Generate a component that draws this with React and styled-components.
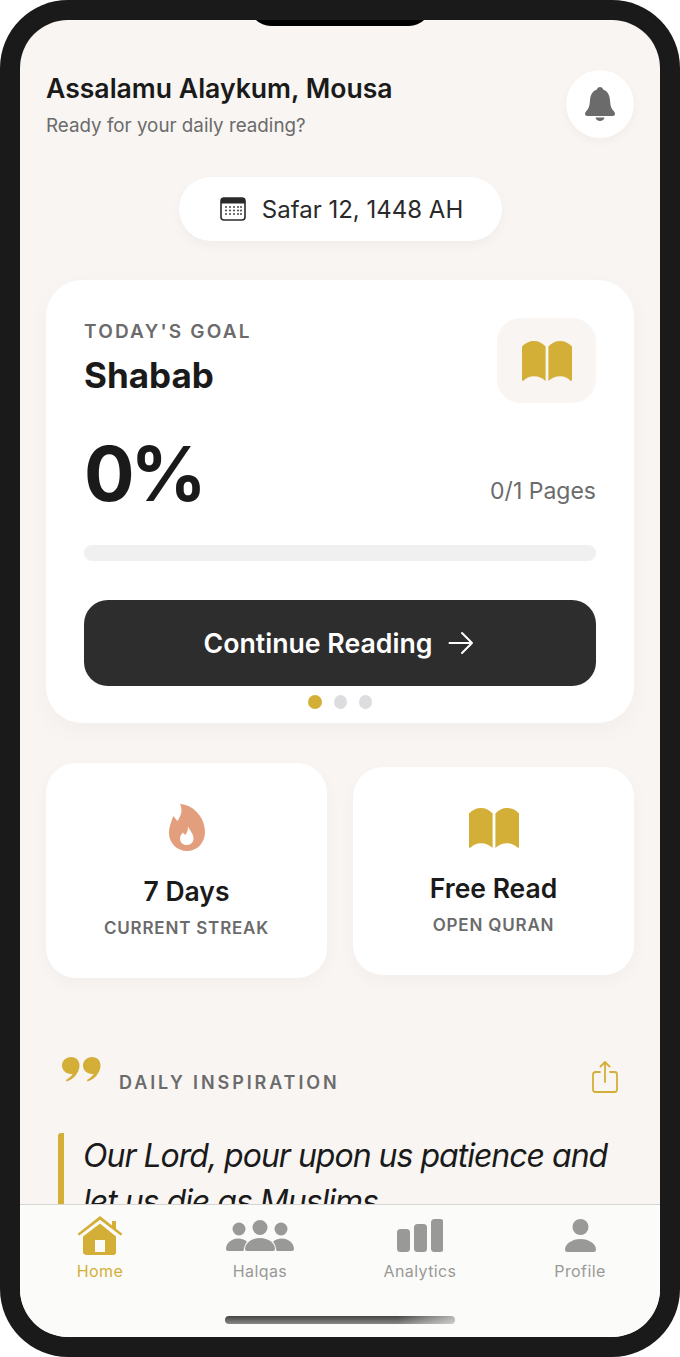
import React from "react";
import styled, { createGlobalStyle } from "styled-components";

const GOLD = "#d4af37";
const INK = "#1a1a1a";
const MUTED = "#6b6b6b";
const TAB_GREY = "#999997";

const GlobalStyle = createGlobalStyle`
  html, body {
    margin: 0;
    padding: 0;
    background: #fff;
  }
  body {
    font-family: "Inter", "Liberation Sans", sans-serif;
    -webkit-font-smoothing: antialiased;
  }
  * {
    box-sizing: border-box;
  }
`;

function BookIcon() {
  return (
    <svg width="50" height="40" viewBox="0 0 50 40" fill={GOLD}>
      <path d="M0 5.5C3 2 7.5 0 12 0C16.5 0 20.5 2 23.6 5.5V40C20.5 37 16.5 35.3 12 35.3C7.5 35.3 4 37 1.2 40C.4 40 0 39.4 0 38.6Z" />
      <path d="M50 5.5C47 2 42.5 0 38 0C33.5 0 29.5 2 26.4 5.5V40C29.5 37 33.5 35.3 38 35.3C42.5 35.3 46 37 48.8 40C49.6 40 50 39.4 50 38.6Z" />
    </svg>
  );
}

function BellIcon() {
  return (
    <svg width="30" height="34" viewBox="0 0 30 34" fill={MUTED}>
      <path d="M15 0C16.6 0 17.8 1.1 18.1 2.5C22.6 4 24.6 8 25 13C25.4 18 25.8 21 28.6 24C29.6 25.1 30 26 30 27C30 28.2 29 29 27.6 29H2.4C1 29 0 28.2 0 27C0 26 .4 25.1 1.4 24C4.2 21 4.6 18 5 13C5.4 8 7.4 4 11.9 2.5C12.2 1.1 13.4 0 15 0Z" />
      <path d="M10.5 30.5H19.5C19.2 32.5 17.3 34 15 34C12.7 34 10.8 32.5 10.5 30.5Z" />
    </svg>
  );
}

function CalendarIcon() {
  return (
    <svg width="26" height="24" viewBox="0 0 26 24">
      <rect x="1" y="1" width="24" height="22" rx="3" fill="#fff" stroke="#2a2a2a" strokeWidth="1.6" />
      <path d="M1 4a3 3 0 0 1 3-3h18a3 3 0 0 1 3 3v2.5H1Z" fill="#2a2a2a" />
      <g fill="#2a2a2a">
        {[10, 13.5, 17].map((y) =>
          [6, 10, 14, 18, 21].map((x) => (
            <rect key={`${x}-${y}`} x={x - 0.8} y={y - 0.8} width="1.6" height="1.6" />
          ))
        )}
      </g>
    </svg>
  );
}

function ArrowIcon() {
  return (
    <svg width="26" height="24" viewBox="0 0 26 24" fill="none" stroke="#fff" strokeWidth="2" strokeLinecap="round" strokeLinejoin="round">
      <path d="M1.5 12H24M14 2L24 12L14 22" />
    </svg>
  );
}

function FlameIcon() {
  return (
    <svg width="36" height="47" viewBox="0 0 36 47">
      <path
        fill="#e39f7d"
        d="M11 0C23 .5 36 12 36 28C36 39 28 47 18 47C8 47 0 39 0 29C0 22 3 17 4 12C6 13.5 7 15.5 8.5 17C12 12 14 6 11 0Z"
      />
      <path
        fill="#fff"
        d="M19 22C20 26 24.5 29 24.5 34.5C24.5 38.5 21.5 41 17.5 41C14 41 11 38.5 11 34.5C11 32 12.5 30 14 28.5C14.8 30 15.5 30.5 16.3 30.8C18.3 28.5 19.3 25 19 22Z"
      />
    </svg>
  );
}

function QuoteIcon() {
  return (
    <svg width="39" height="25" viewBox="0 0 39 25" fill={GOLD}>
      <path d="M9 0C14.5 0 17.5 4 17.5 8.5C17.5 15.5 11.5 22.5 4.5 24.5L4 23C7 21 9.5 19 10.8 16.7C10.2 16.9 9.6 17 9 17C4 17 0 13.3 0 8.5C0 3.8 4 0 9 0Z" />
      <path d="M30 0C35.5 0 38.5 4 38.5 8.5C38.5 15.5 32.5 22.5 25.5 24.5L25 23C28 21 30.5 19 31.8 16.7C31.2 16.9 30.6 17 30 17C25 17 21 13.3 21 8.5C21 3.8 25 0 30 0Z" />
    </svg>
  );
}

function ShareIcon() {
  return (
    <svg width="26" height="32" viewBox="0 0 26 32" fill="none" stroke={GOLD} strokeWidth="1.8" strokeLinecap="round" strokeLinejoin="round">
      <path d="M8 11H3.5C2 11 1 12 1 13.5V28.5C1 30 2 31 3.5 31H22.5C24 31 25 30 25 28.5V13.5C25 12 24 11 22.5 11H18" />
      <path d="M13 21V1.5M8.5 5.5L13 1L17.5 5.5" />
    </svg>
  );
}

function HomeIcon({ color }) {
  return (
    <svg width="44" height="39" viewBox="0 0 44 39" fill={color}>
      <path fillRule="evenodd" d="M22 7.5L38 20.5V36.5C38 38 37 39 35.5 39H8.5C7 39 5 38 5 36.5V20.5ZM17 24V36H27V24Z" />
      <path d="M22 0L34 9.5V5H38V12.7L43.4 17C44.2 17.7 44.2 18.4 43.8 18.9C43.3 19.5 42.6 19.5 42 19L22 3.8L2 19C1.4 19.5 .7 19.5 .2 18.9C-.2 18.4 -.2 17.7 .6 17Z" />
    </svg>
  );
}

function GroupIcon({ color }) {
  return (
    <svg width="68" height="31" viewBox="0 0 68 31" fill={color}>
      <circle cx="13" cy="9" r="6.5" />
      <circle cx="34" cy="7.5" r="7.5" />
      <circle cx="55" cy="9" r="6.5" />
      <path d="M2 31C.8 31 0 30.2 0 29C0 23 6 18.5 12 18.5C15.5 18.5 18.5 19.5 21 21.5C19 24 18 27 17.5 31Z" />
      <path d="M21 31C19.8 31 19 30.2 19 29C19 23 25.5 18 34 18C42.5 18 49 23 49 29C49 30.2 48.2 31 47 31Z" />
      <path d="M66 31C67.2 31 68 30.2 68 29C68 23 62 18.5 56 18.5C52.5 18.5 49.5 19.5 47 21.5C49 24 50 27 50.5 31Z" />
    </svg>
  );
}

function BarsIcon({ color }) {
  return (
    <svg width="46" height="33" viewBox="0 0 46 33" fill={color}>
      <rect x="0" y="10" width="13" height="23" rx="3.5" />
      <rect x="17" y="5" width="13" height="28" rx="3.5" />
      <rect x="34" y="0" width="12.5" height="33" rx="3.5" />
    </svg>
  );
}

function PersonIcon({ color }) {
  return (
    <svg width="31" height="33" viewBox="0 0 31 33" fill={color}>
      <circle cx="15.5" cy="8" r="8" />
      <path d="M2.5 33C1 33 0 32 0 30.7C0 25 7 20 15.5 20C24 20 31 25 31 30.7C31 32 30 33 28.5 33Z" />
    </svg>
  );
}

const TABS = [
  { label: "Home", Icon: HomeIcon, active: true },
  { label: "Halqas", Icon: GroupIcon },
  { label: "Analytics", Icon: BarsIcon },
  { label: "Profile", Icon: PersonIcon },
];

export default function App() {
  return (
    <>
      <GlobalStyle />
      <Frame>
        <Screen>
          <Notch />
          <Header>
            <div>
              <Title>Assalamu Alaykum, Mousa</Title>
              <Subtitle>Ready for your daily reading?</Subtitle>
            </div>
            <BellButton>
              <BellIcon />
            </BellButton>
          </Header>

          <DateRow>
            <DatePill>
              <CalendarIcon />
              Safar 12, 1448 AH
            </DatePill>
          </DateRow>

          <GoalCard>
            <GoalTop>
              <div>
                <GoalLabel>TODAY'S GOAL</GoalLabel>
                <GoalName>Shabab</GoalName>
              </div>
              <BookTile>
                <BookIcon />
              </BookTile>
            </GoalTop>
            <ProgressRow>
              <Percent>0%</Percent>
              <Pages>0/1 Pages</Pages>
            </ProgressRow>
            <Track />
            <ContinueButton>
              Continue Reading
              <ArrowIcon />
            </ContinueButton>
            <Dots>
              <Dot $active />
              <Dot />
              <Dot />
            </Dots>
          </GoalCard>

          <StatRow>
            <StatCard $height={215}>
              <FlameIcon />
              <StatValue>7 Days</StatValue>
              <StatLabel>CURRENT STREAK</StatLabel>
            </StatCard>
            <StatCard $height={208}>
              <BookIcon />
              <StatValue>Free Read</StatValue>
              <StatLabel>OPEN QURAN</StatLabel>
            </StatCard>
          </StatRow>

          <InspirationHead>
            <QuoteMark>
              <QuoteIcon />
            </QuoteMark>
            <InspirationLabel>DAILY INSPIRATION</InspirationLabel>
            <ShareIcon />
          </InspirationHead>
          <Verse>
            <VerseText>Our Lord, pour upon us patience and let us die as Muslims.</VerseText>
          </Verse>

          <TabBar>
            {TABS.map(({ label, Icon, active }) => (
              <Tab key={label} $active={active}>
                <TabIconBox>
                  <Icon color={active ? GOLD : TAB_GREY} />
                </TabIconBox>
                {label}
              </Tab>
            ))}
            <HomeIndicator />
          </TabBar>
        </Screen>
      </Frame>
    </>
  );
}

const Frame = styled.div`
  width: 680px;
  height: 1357px;
  padding: 20px;
  background: #1a1a1a;
  border-radius: 68px;
  overflow: hidden;
`;

const Screen = styled.div`
  position: relative;
  height: 1317px;
  padding: 50px 26px 0;
  background: #f8f5f2;
  border-radius: 48px;
  overflow: hidden;
`;

const Notch = styled.div`
  position: absolute;
  top: -20px;
  left: 229px;
  width: 182px;
  height: 26px;
  background: #000;
  border-radius: 0 0 22px 22px;
`;

const Header = styled.header`
  display: flex;
  justify-content: space-between;
  align-items: flex-start;
`;

const Title = styled.h1`
  margin: 0;
  padding-top: 2px;
  font-size: 26.6px;
  line-height: 32px;
  font-weight: 600;
  color: ${INK};
`;

const Subtitle = styled.p`
  margin: 10px 0 0;
  font-size: 18.8px;
  line-height: 24px;
  color: ${MUTED};
`;

const BellButton = styled.div`
  display: flex;
  justify-content: center;
  align-items: center;
  width: 68px;
  height: 68px;
  background: #fff;
  border-radius: 50%;
  box-shadow: 0 3px 10px rgba(0, 0, 0, 0.04);
`;

const DateRow = styled.div`
  display: flex;
  justify-content: center;
  margin-top: 39px;
  padding-left: 1px;
`;

const DatePill = styled.div`
  display: flex;
  align-items: center;
  gap: 16px;
  height: 64px;
  padding: 0 39px 0 41px;
  background: #fff;
  border-radius: 32px;
  font-size: 24px;
  color: #2a2a2a;
  box-shadow: 0 4px 12px rgba(0, 0, 0, 0.04);
`;

const GoalCard = styled.section`
  position: relative;
  margin-top: 39px;
  height: 443px;
  padding: 38px 38px 0;
  background: #fff;
  border-radius: 36px;
  box-shadow: 0 8px 24px rgba(0, 0, 0, 0.03);
`;

const GoalTop = styled.div`
  display: flex;
  justify-content: space-between;
  align-items: flex-start;
`;

const GoalLabel = styled.div`
  margin-top: 3px;
  font-size: 19px;
  line-height: 22px;
  font-weight: 600;
  letter-spacing: 2.2px;
  color: ${MUTED};
`;

const GoalName = styled.div`
  margin-top: 11px;
  font-size: 35px;
  line-height: 42px;
  font-weight: 700;
  color: ${INK};
`;

const BookTile = styled.div`
  display: flex;
  justify-content: center;
  align-items: center;
  width: 99px;
  height: 85px;
  background: #f8f5f2;
  border-radius: 24px;
`;

const ProgressRow = styled.div`
  display: flex;
  justify-content: space-between;
  align-items: flex-end;
  margin-top: 25px;
`;

const Percent = styled.div`
  font-size: 75px;
  line-height: 92px;
  font-weight: 700;
  letter-spacing: -4px;
  color: ${INK};
`;

const Pages = styled.div`
  padding-bottom: 15px;
  font-size: 23px;
  line-height: 28px;
  color: ${MUTED};
`;

const Track = styled.div`
  height: 16px;
  margin-top: 25px;
  background: #f0f0f0;
  border-radius: 8px;
`;

const ContinueButton = styled.div`
  display: flex;
  justify-content: center;
  align-items: center;
  gap: 16px;
  height: 86px;
  margin-top: 39px;
  padding-right: 2px;
  background: #2d2d2d;
  border-radius: 24px;
  font-size: 26.7px;
  font-weight: 600;
  color: #fff;
`;

const Dots = styled.div`
  display: flex;
  justify-content: center;
  gap: 12px;
  margin-top: 9px;
`;

const Dot = styled.span`
  width: ${(p) => (p.$active ? 14 : 13)}px;
  height: 14px;
  background: ${(p) => (p.$active ? GOLD : "#dddddf")};
  border-radius: 50%;
`;

const StatRow = styled.div`
  display: flex;
  align-items: center;
  gap: 26px;
  margin-top: 40px;
`;

const StatCard = styled.div`
  display: flex;
  flex: 1;
  flex-direction: column;
  align-items: center;
  height: ${(p) => p.$height}px;
  padding-top: 41px;
  background: #fff;
  border-radius: 30px;
  box-shadow: 0 6px 18px rgba(0, 0, 0, 0.03);
`;

const StatValue = styled.div`
  margin-top: 24px;
  font-size: 26.5px;
  line-height: 32px;
  font-weight: 600;
  color: ${INK};
`;

const StatLabel = styled.div`
  margin-top: 10px;
  font-size: 17px;
  line-height: 22px;
  font-weight: 600;
  letter-spacing: 0.8px;
  color: ${MUTED};
`;

const InspirationHead = styled.div`
  display: flex;
  align-items: flex-end;
  margin-top: 79px;
  padding: 0 16px;
`;

const QuoteMark = styled.div`
  display: flex;
  margin-right: 18px;
  padding-bottom: 11px;
`;

const InspirationLabel = styled.div`
  flex: 1;
  font-size: 18px;
  line-height: 22px;
  font-weight: 600;
  letter-spacing: 2.9px;
  color: ${MUTED};
  margin-bottom: -1px;
`;

const Verse = styled.blockquote`
  margin: 42px 0 0 12px;
  padding-left: 19px;
  border-left: 6px solid ${GOLD};
  border-radius: 3px;
`;

const VerseText = styled.p`
  margin: -2px 0 0;
  font-size: 32px;
  line-height: 46px;
  letter-spacing: -1px;
  font-style: italic;
  color: ${INK};
`;

const TabBar = styled.nav`
  position: absolute;
  left: 0;
  right: 0;
  bottom: 0;
  display: grid;
  grid-template-columns: repeat(4, 1fr);
  align-content: start;
  height: 133px;
  padding-top: 10px;
  background: #fbfbf9;
  border-top: 1px solid #d6d4d0;
`;

const Tab = styled.div`
  display: flex;
  flex-direction: column;
  align-items: center;
  font-size: 16px;
  line-height: 20px;
  letter-spacing: 0.4px;
  color: ${(p) => (p.$active ? GOLD : TAB_GREY)};
`;

const TabIconBox = styled.div`
  display: flex;
  align-items: center;
  height: 40px;
  margin-bottom: 6px;
`;

const HomeIndicator = styled.div`
  position: absolute;
  left: 205px;
  bottom: 13px;
  width: 230px;
  height: 8px;
  border-radius: 4px;
  background: linear-gradient(90deg, rgba(251, 251, 249, 0) 75%, rgba(251, 251, 249, 0.6)),
    linear-gradient(180deg, #444, #888);
`;
